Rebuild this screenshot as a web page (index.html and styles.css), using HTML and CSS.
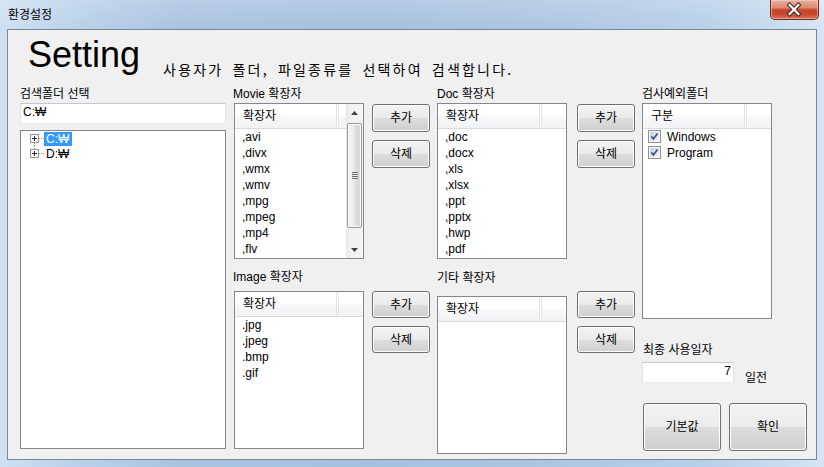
FILE: index.html
```html
<!DOCTYPE html>
<html lang="ko">
<head>
<meta charset="utf-8">
<title>환경설정</title>
<link rel="stylesheet" href="styles.css">
</head>
<body>
<div class="window">
  <div class="titlebar">
    <span class="title">환경설정</span>
    <div class="close">
      <svg width="49" height="20" viewBox="0 0 49 20">
        <path d="M20 5 L29 14 M29 5 L20 14" stroke="#4a2a26" stroke-width="4.4" stroke-linecap="square" fill="none"/>
        <path d="M20 5 L29 14 M29 5 L20 14" stroke="#ffffff" stroke-width="2.2" stroke-linecap="square" fill="none"/>
      </svg>
    </div>
  </div>
  <div class="client">
    <div class="header">
      <h1 class="brand">Setting</h1>
      <p class="subtitle">사용자가 폴더, 파일종류를 선택하여 검색합니다.</p>
    </div>
    <div class="body">
      <div class="col col-folder">
        <div class="lbl">검색폴더 선택</div>
        <div class="textbox">C:₩</div>
        <div class="tree">
          <div class="tree-row">
            <svg class="expander" width="14" height="15" viewBox="0 0 14 15">
              <path d="M4.5 12 V15" stroke="#a0a0a0" stroke-dasharray="1 1" fill="none"/>
              <path d="M9 7.5 H14" stroke="#a0a0a0" stroke-dasharray="1 1" fill="none"/>
              <rect x="0.5" y="3.5" width="8" height="8" fill="#f7f7f7" stroke="#979797"/>
              <path d="M2 7.5 H7 M4.5 5 V10" stroke="#2b2b2b" fill="none"/>
            </svg>
            <span class="tree-label selected">C:₩</span>
          </div>
          <div class="tree-row">
            <svg class="expander" width="14" height="15" viewBox="0 0 14 15">
              <path d="M4.5 0 V3" stroke="#a0a0a0" stroke-dasharray="1 1" fill="none"/>
              <path d="M9 7.5 H14" stroke="#a0a0a0" stroke-dasharray="1 1" fill="none"/>
              <rect x="0.5" y="3.5" width="8" height="8" fill="#f7f7f7" stroke="#979797"/>
              <path d="M2 7.5 H7 M4.5 5 V10" stroke="#2b2b2b" fill="none"/>
            </svg>
            <span class="tree-label">D:₩</span>
          </div>
        </div>
      </div>

      <div class="col col-list">
        <div class="lbl shift">Movie 확장자</div>
        <div class="listview lv-short">
          <div class="lv-main">
            <div class="lv-head"><span class="lv-col">확장자</span><span class="lv-rest"></span></div>
            <ul class="lv-rows">
              <li>,avi</li><li>,divx</li><li>,wmx</li><li>,wmv</li>
              <li>,mpg</li><li>,mpeg</li><li>,mp4</li><li>,flv</li>
            </ul>
          </div>
          <div class="vscroll">
            <div class="sb-btn">
              <svg width="7" height="4" viewBox="0 0 7 4"><path d="M0 4 L3.5 0 L7 4 Z" fill="#404040"/></svg>
            </div>
            <div class="sb-track">
              <div class="sb-thumb"><span class="sb-grip"></span></div>
            </div>
            <div class="sb-btn">
              <svg width="7" height="4" viewBox="0 0 7 4"><path d="M0 0 L3.5 4 L7 0 Z" fill="#404040"/></svg>
            </div>
          </div>
        </div>
        <div class="lbl shift lbl-image">Image 확장자</div>
        <div class="listview lv-image">
          <div class="lv-main">
            <div class="lv-head"><span class="lv-col">확장자</span><span class="lv-rest"></span></div>
            <ul class="lv-rows">
              <li>.jpg</li><li>.jpeg</li><li>.bmp</li><li>.gif</li>
            </ul>
          </div>
        </div>
      </div>

      <div class="col col-btns">
        <button class="btn">추가</button>
        <button class="btn">삭제</button>
        <button class="btn btn-low first-low">추가</button>
        <button class="btn btn-low">삭제</button>
      </div>

      <div class="col col-list">
        <div class="lbl">Doc 확장자</div>
        <div class="listview lv-short">
          <div class="lv-main">
            <div class="lv-head"><span class="lv-col">확장자</span><span class="lv-rest"></span></div>
            <ul class="lv-rows">
              <li>,doc</li><li>,docx</li><li>,xls</li><li>,xlsx</li>
              <li>,ppt</li><li>,pptx</li><li>,hwp</li><li>,pdf</li>
            </ul>
          </div>
        </div>
        <div class="lbl lbl-etc">기타 확장자</div>
        <div class="listview lv-etc">
          <div class="lv-main">
            <div class="lv-head"><span class="lv-col">확장자</span><span class="lv-rest"></span></div>
            <ul class="lv-rows"></ul>
          </div>
        </div>
      </div>

      <div class="col col-btns">
        <button class="btn">추가</button>
        <button class="btn">삭제</button>
        <button class="btn btn-low first-low">추가</button>
        <button class="btn btn-low">삭제</button>
      </div>

      <div class="col col-right">
        <div class="lbl">검사예외폴더</div>
        <div class="listview lv-except">
          <div class="lv-main">
            <div class="lv-head"><span class="lv-col">구분</span><span class="lv-rest"></span></div>
            <ul class="lv-rows check-rows">
              <li>
                <svg class="chk" width="13" height="13" viewBox="0 0 13 13">
                  <defs><linearGradient id="cb1" x1="0" y1="0" x2="1" y2="1"><stop offset="0" stop-color="#c9ced6"/><stop offset="1" stop-color="#f3f4f6"/></linearGradient></defs>
                  <rect x="0.5" y="0.5" width="12" height="12" fill="#fbfbfb" stroke="#8e8f8f"/>
                  <rect x="2" y="2" width="9" height="9" fill="url(#cb1)"/>
                  <path d="M3.3 6.4 L5.4 8.8 L9.6 3.4" fill="none" stroke="#3f57a0" stroke-width="1.7"/>
                </svg>
                <span>Windows</span>
              </li>
              <li>
                <svg class="chk" width="13" height="13" viewBox="0 0 13 13">
                  <defs><linearGradient id="cb2" x1="0" y1="0" x2="1" y2="1"><stop offset="0" stop-color="#c9ced6"/><stop offset="1" stop-color="#f3f4f6"/></linearGradient></defs>
                  <rect x="0.5" y="0.5" width="12" height="12" fill="#fbfbfb" stroke="#8e8f8f"/>
                  <rect x="2" y="2" width="9" height="9" fill="url(#cb2)"/>
                  <path d="M3.3 6.4 L5.4 8.8 L9.6 3.4" fill="none" stroke="#3f57a0" stroke-width="1.7"/>
                </svg>
                <span>Program</span>
              </li>
            </ul>
          </div>
        </div>
        <div class="lbl lbl-days">최종 사용일자</div>
        <div class="days-row">
          <div class="textbox days">7</div>
          <span class="days-unit">일전</span>
        </div>
        <div class="big-btns">
          <button class="btn btn-big">기본값</button>
          <button class="btn btn-big">확인</button>
        </div>
      </div>
    </div>
  </div>
</div>
</body>
</html>
```
FILE: styles.css
```css
* {
  box-sizing: border-box;
  margin: 0;
  padding: 0;
}

html, body {
  width: 824px;
  height: 467px;
  overflow: hidden;
}

body {
  font-family: "Liberation Sans", "Noto Sans CJK KR", sans-serif;
  font-size: 12px;
  color: #000;
  background: #a9c3df;
}

.window {
  width: 824px;
  height: 467px;
  display: flex;
  flex-direction: column;
  background:
    linear-gradient(rgba(255,255,255,0.18), rgba(255,255,255,0) 30px),
    linear-gradient(to right, #cfe0f1 0%, #bcd2ea 8%, #a9c3df 22%, #a5c0dd 45%, #abc5e0 65%, #b8cfe8 85%, #c9dcef 95%, #d6e6f5 100%);
}

/* ---------- title bar ---------- */
.titlebar {
  height: 29px;
  display: flex;
  justify-content: space-between;
  align-items: flex-start;
  padding-left: 8px;
  padding-right: 5px;
  flex: none;
}

.title {
  font-family: "Noto Sans CJK KR", sans-serif;
  font-size: 12px;
  line-height: 16px;
  margin-top: 6px;
  color: #000;
}

.close {
  width: 49px;
  height: 20px;
  border: 1px solid #6b2b20;
  border-top: none;
  border-radius: 0 0 5px 5px;
  background: linear-gradient(#e9b1a2 0%, #dc8a73 40%, #c5462b 52%, #c64a2f 75%, #dc7657 100%);
  box-shadow: inset 0 0 0 1px rgba(255, 225, 215, 0.45);
  display: flex;
}

.close svg {
  display: block;
  margin-left: -1px;
}

/* ---------- client ---------- */
.client {
  margin-left: 7px;
  width: 810px;
  height: 431px;
  border: 1px solid #7b8796;
  background: #f0f0f0;
  flex: none;
}

.header {
  display: flex;
  align-items: flex-start;
  height: 56px;
  padding-left: 20px;
}

.brand {
  font-family: "Liberation Sans", Arial, sans-serif;
  font-weight: normal;
  font-size: 36px;
  line-height: 36px;
  margin-top: 7px;
}

.subtitle {
  font-family: "Noto Sans CJK KR", sans-serif;
  font-size: 14px;
  line-height: 16px;
  margin-top: 31px;
  margin-left: 23px;
  letter-spacing: 2.2px;
  word-spacing: 3px;
  white-space: nowrap;
}

.body {
  display: flex;
  align-items: flex-start;
  padding-left: 12px;
}

.col {
  display: flex;
  flex-direction: column;
  flex: none;
}

.col-folder { width: 206px; }
.col-list { width: 130px; margin-left: 8px; }
.col-btns { width: 58px; margin-left: 8px; padding-top: 18px; }
.col-list + .col-btns + .col-list { margin-left: 7px; }
.col-list + .col-btns + .col-list + .col-btns { margin-left: 10px; }
.col-right { width: 166px; margin-left: 7px; }

.lbl {
  height: 17px;
  line-height: 16px;
  white-space: nowrap;
}

.lbl.shift { margin-left: -1px; }
.lbl-image { margin-top: 10px; margin-bottom: 5px; }
.lbl-etc { margin-top: 11px; margin-bottom: 9px; }
.lbl-days { margin-top: 23px; margin-bottom: 3px; margin-left: 1px; }

/* ---------- text boxes ---------- */
.textbox {
  height: 21px;
  border: 1px solid;
  border-color: #c5c8ce #dfe2e7 #e6eaef #dfe2e7;
  background: #fff;
  padding: 1px 2px;
  line-height: 14px;
  white-space: nowrap;
}

.days-row {
  display: flex;
  align-items: flex-start;
}

.textbox.days {
  width: 92px;
  text-align: right;
  padding-right: 2px;
}

.days-unit {
  margin-left: 11px;
  margin-top: 8px;
  line-height: 16px;
}

/* ---------- tree ---------- */
.tree {
  margin-top: 6px;
  height: 319px;
  border: 1px solid #828790;
  background: #fff;
  padding-left: 9px;
}

.tree-row {
  height: 15px;
  display: flex;
  align-items: flex-start;
}

.expander {
  display: block;
  flex: none;
}

.tree-label {
  height: 14px;
  margin-top: 1px;
  line-height: 14px;
  padding: 0 2px;
  white-space: nowrap;
}

.tree-label.selected {
  background: #3399ff;
  color: #fff;
  width: 28px;
}

/* ---------- list views ---------- */
.listview {
  border: 1px solid #828790;
  background: #fff;
  display: flex;
  overflow: hidden;
  width: 130px;
}

.lv-short { height: 156px; }
.lv-image { height: 158px; }
.lv-etc { height: 158px; }
.lv-except { height: 216px; }

.lv-main {
  flex: 1;
  min-width: 0;
}

.lv-head {
  height: 25px;
  display: flex;
  background: linear-gradient(#ffffff 0%, #ffffff 45%, #f6f7f8 55%, #f2f3f5 100%);
  border-bottom: 1px solid #dadbdd;
}

.lv-col {
  width: 102px;
  flex: none;
  padding-left: 8px;
  line-height: 24px;
  border-right: 1px solid #e3e4e6;
  white-space: nowrap;
}

.lv-rest {
  flex: 1;
  border-left: 1px solid #fff;
  box-shadow: inset 1px 0 0 #e3e4e6;
}

.lv-rows {
  list-style: none;
}

.lv-rows li {
  height: 16px;
  line-height: 16px;
  padding-left: 7px;
  white-space: nowrap;
}

.check-rows li {
  display: flex;
  align-items: center;
  padding-left: 5px;
}

.chk {
  display: block;
  flex: none;
  margin-top: -2px;
  margin-right: 6px;
}

/* ---------- scrollbar ---------- */
.vscroll {
  width: 17px;
  flex: none;
  display: flex;
  flex-direction: column;
  background: linear-gradient(to right, #e7e7e7 0%, #f1f1f1 25%, #f4f4f4 100%);
}

.sb-btn {
  height: 17px;
  flex: none;
  display: flex;
  align-items: center;
  justify-content: center;
}

.sb-btn svg { display: block; }

.sb-track {
  flex: 1;
  padding: 2px 1px 0 1px;
}

.sb-thumb {
  height: 105px;
  border: 1px solid #9a9a9a;
  border-radius: 2px;
  background: linear-gradient(to right, #f5f5f5 0%, #ededed 45%, #dedede 55%, #d5d5d5 100%);
  box-shadow: inset 0 0 0 1px #fbfbfb;
  display: flex;
  align-items: center;
  justify-content: center;
}

.sb-grip {
  width: 6px;
  height: 7px;
  background: repeating-linear-gradient(#6e6e6e 0 1px, #e6e6e6 1px 2px);
}

/* ---------- buttons ---------- */
.btn {
  display: flex;
  align-items: center;
  justify-content: center;
  width: 58px;
  height: 28px;
  border: 1px solid #707070;
  border-radius: 3px;
  background: linear-gradient(#f2f2f2 0%, #ebebeb 50%, #dddddd 51%, #cfcfcf 100%);
  box-shadow: inset 0 0 0 1px #fcfcfc;
  font-family: "Liberation Sans", "Noto Sans CJK KR", sans-serif;
  font-size: 12px;
  color: #000;
  line-height: 16px;
  flex: none;
}

.btn + .btn { margin-top: 8px; }
.btn-low { height: 27px; }
.btn.first-low { margin-top: 123px; }

.big-btns {
  display: flex;
  gap: 8px;
  margin-top: 17px;
  margin-left: 1px;
}

.btn.btn-big {
  width: 78px;
  height: 48px;
  margin-top: 0;
}
```
